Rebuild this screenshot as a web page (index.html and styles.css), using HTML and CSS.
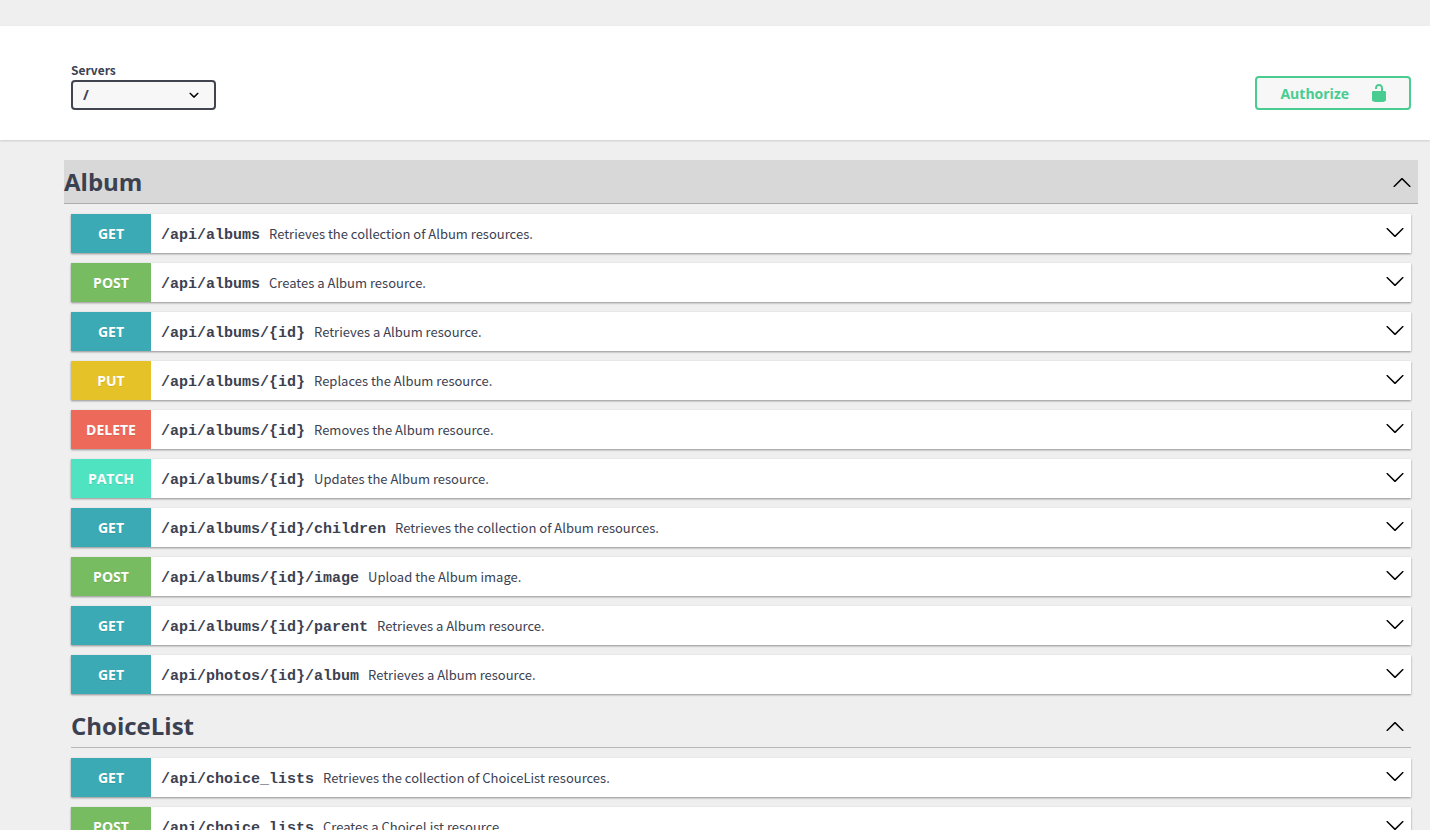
FILE: index.html
```
<!DOCTYPE html>
<html lang="en">
<head>
<meta charset="utf-8">
<title>API documentation</title>
<link rel="stylesheet" href="styles.css">
</head>

<body>
<svg class="defs" aria-hidden="true">
  <symbol id="down" viewBox="0 0 20 20"><path d="M17.418 6.109c.272-.268.709-.268.979 0s.271.701 0 .969l-7.908 7.83c-.27.268-.707.268-.979 0l-7.908-7.83c-.27-.268-.27-.701 0-.969.271-.268.709-.268.979 0L10 13.25l7.418-7.141z"/></symbol>
  <symbol id="up" viewBox="0 0 20 20"><path d="M17.418 14.908c.272.268.709.268.979 0s.271-.701 0-.969l-7.908-7.83c-.27-.268-.707-.268-.979 0l-7.908 7.83c-.27.268-.27.701 0 .969.271.268.709.268.979 0L10 7.767l7.418 7.141z"/></symbol>
</svg>

<header class="scheme">
  <div class="servers">
    <label for="servers">Servers</label>
    <select id="servers"><option>/</option></select>
  </div>
  <button type="button" class="authorize">
    <span>Authorize</span>
    <svg width="20" height="20" viewBox="0 0 20 20"><path d="M15.8 8H14V5.6C14 2.703 12.665 1 10 1 7.334 1 6 2.703 6 5.6V6h2v-.801C8 3.754 8.797 3 10 3c1.203 0 2 .754 2 2.199V8H4c-.553 0-1 .646-1 1.199V17c0 .549.428 1.139.951 1.307l1.197.387C5.672 18.861 6.55 19 7.1 19h5.8c.549 0 1.428-.139 1.951-.307l1.196-.387c.524-.167.953-.757.953-1.306V9.199C17 8.646 16.352 8 15.8 8z"/></svg>
  </button>
</header>

<main class="wrapper">
  <section>
    <h3 class="tag active"><button type="button">Album<svg class="arrow"><use href="#up"/></svg></button></h3>
    <div class="list">
      <button type="button" class="op get"><b>GET</b><code>/api/albums</code><span>Retrieves the collection of Album resources.</span><svg class="arrow"><use href="#down"/></svg></button>
      <button type="button" class="op post"><b>POST</b><code>/api/albums</code><span>Creates a Album resource.</span><svg class="arrow"><use href="#down"/></svg></button>
      <button type="button" class="op get"><b>GET</b><code>/api/albums/{id}</code><span>Retrieves a Album resource.</span><svg class="arrow"><use href="#down"/></svg></button>
      <button type="button" class="op put"><b>PUT</b><code>/api/albums/{id}</code><span>Replaces the Album resource.</span><svg class="arrow"><use href="#down"/></svg></button>
      <button type="button" class="op delete"><b>DELETE</b><code>/api/albums/{id}</code><span>Removes the Album resource.</span><svg class="arrow"><use href="#down"/></svg></button>
      <button type="button" class="op patch"><b>PATCH</b><code>/api/albums/{id}</code><span>Updates the Album resource.</span><svg class="arrow"><use href="#down"/></svg></button>
      <button type="button" class="op get"><b>GET</b><code>/api/albums/{id}/children</code><span>Retrieves the collection of Album resources.</span><svg class="arrow"><use href="#down"/></svg></button>
      <button type="button" class="op post"><b>POST</b><code>/api/albums/{id}/image</code><span>Upload the Album image.</span><svg class="arrow"><use href="#down"/></svg></button>
      <button type="button" class="op get"><b>GET</b><code>/api/albums/{id}/parent</code><span>Retrieves a Album resource.</span><svg class="arrow"><use href="#down"/></svg></button>
      <button type="button" class="op get"><b>GET</b><code>/api/photos/{id}/album</code><span>Retrieves a Album resource.</span><svg class="arrow"><use href="#down"/></svg></button>
    </div>
  </section>

  <section>
    <h3 class="tag"><button type="button">ChoiceList<svg class="arrow"><use href="#up"/></svg></button></h3>
    <div class="list">
      <button type="button" class="op get"><b>GET</b><code>/api/choice_lists</code><span>Retrieves the collection of ChoiceList resources.</span><svg class="arrow"><use href="#down"/></svg></button>
      <button type="button" class="op post"><b>POST</b><code>/api/choice_lists</code><span>Creates a ChoiceList resource.</span><svg class="arrow"><use href="#down"/></svg></button>
    </div>
  </section>
</main>
</body>
</html>
```
FILE: styles.css
```
*{box-sizing:border-box;padding:0;margin:0;}
body{background:#efefef;color:#3b4151;padding-top:26px;font-family:"Noto Sans CJK SC","Open Sans",sans-serif;font-size:13px;}
button{border:none;background:none;color:inherit;cursor:pointer;}
.defs{display:none;}

/* top bar */
.scheme{display:flex;justify-content:space-between;align-items:flex-end;background:#fff;padding:36px 19px 30px 71px;box-shadow:0 1px 2px rgba(0,0,0,.15);}
.servers{display:flex;flex-direction:column;gap:2px;}
.servers label{font-size:12px;font-weight:bold;line-height:16px;}
.servers select{width:145px;height:30px;padding:0 10px 2px;border:2px solid #41444e;border-radius:4px;color:#3b4151;font-family:"Open Sans",sans-serif;font-size:14px;font-weight:bold;-webkit-appearance:none;appearance:none;background:#f7f7f7 url("data:image/svg+xml,%3Csvg xmlns='http://www.w3.org/2000/svg' viewBox='0 0 20 20'%3E%3Cpath d='M13.418 7.859c.271-.268.709-.268.978 0 .27.268.272.701 0 .969l-3.908 3.83c-.27.268-.707.268-.979 0l-3.908-3.83c-.27-.267-.27-.701 0-.969.271-.268.709-.268.978 0L10 11l3.418-3.141z'/%3E%3C/svg%3E") right 10px center/20px no-repeat;}
.authorize{display:flex;align-items:center;gap:20px;height:34px;padding:0 20px 0 23px;border:2px solid #49cc90;border-radius:4px;background:#f7f7f7;color:#49cc90;font-family:"Open Sans",sans-serif;font-size:14px;font-weight:bold;}
.authorize svg{fill:#49cc90;}

/* sections */
.wrapper{padding:20px 19px 20px 71px;}
.tag{border-bottom:1px solid #b5b7ba;margin-bottom:10px;}
.tag button{display:flex;align-items:center;justify-content:space-between;width:100%;height:43px;font-family:"Open Sans",sans-serif;font-size:24px;font-weight:bold;}
.tag.active{background:#d8d8d8;margin-left:-7px;margin-right:-7px;border-bottom-color:#adadad;}
.arrow{width:20px;height:20px;margin-right:6px;flex:none;}

/* operations */
.list{display:flex;flex-direction:column;gap:10px;margin-bottom:10px;}
.op{display:flex;align-items:center;width:100%;height:39px;background:#fff;box-shadow:0 1px 2px rgba(0,0,0,.4);text-align:left;}
.op b{width:80px;line-height:39px;text-align:center;color:#fff;font-family:"Open Sans",sans-serif;font-size:14px;font-weight:bold;text-shadow:0 1px 0 rgba(0,0,0,.1);}
.op code{margin:0 9px 0 10px;padding-top:4px;font-family:"Liberation Mono",monospace;font-size:15px;font-weight:bold;}
.op span{flex:1;font-family:"Noto Sans CJK SC",sans-serif;font-size:13px;}
.op .arrow{margin-bottom:4px;}
.get b{background:#3caab5;}
.post b{background:#78bc61;}
.put b{background:#e6c229;}
.delete b{background:#ed6a5a;}
.patch b{background:#50e3c2;}
```
